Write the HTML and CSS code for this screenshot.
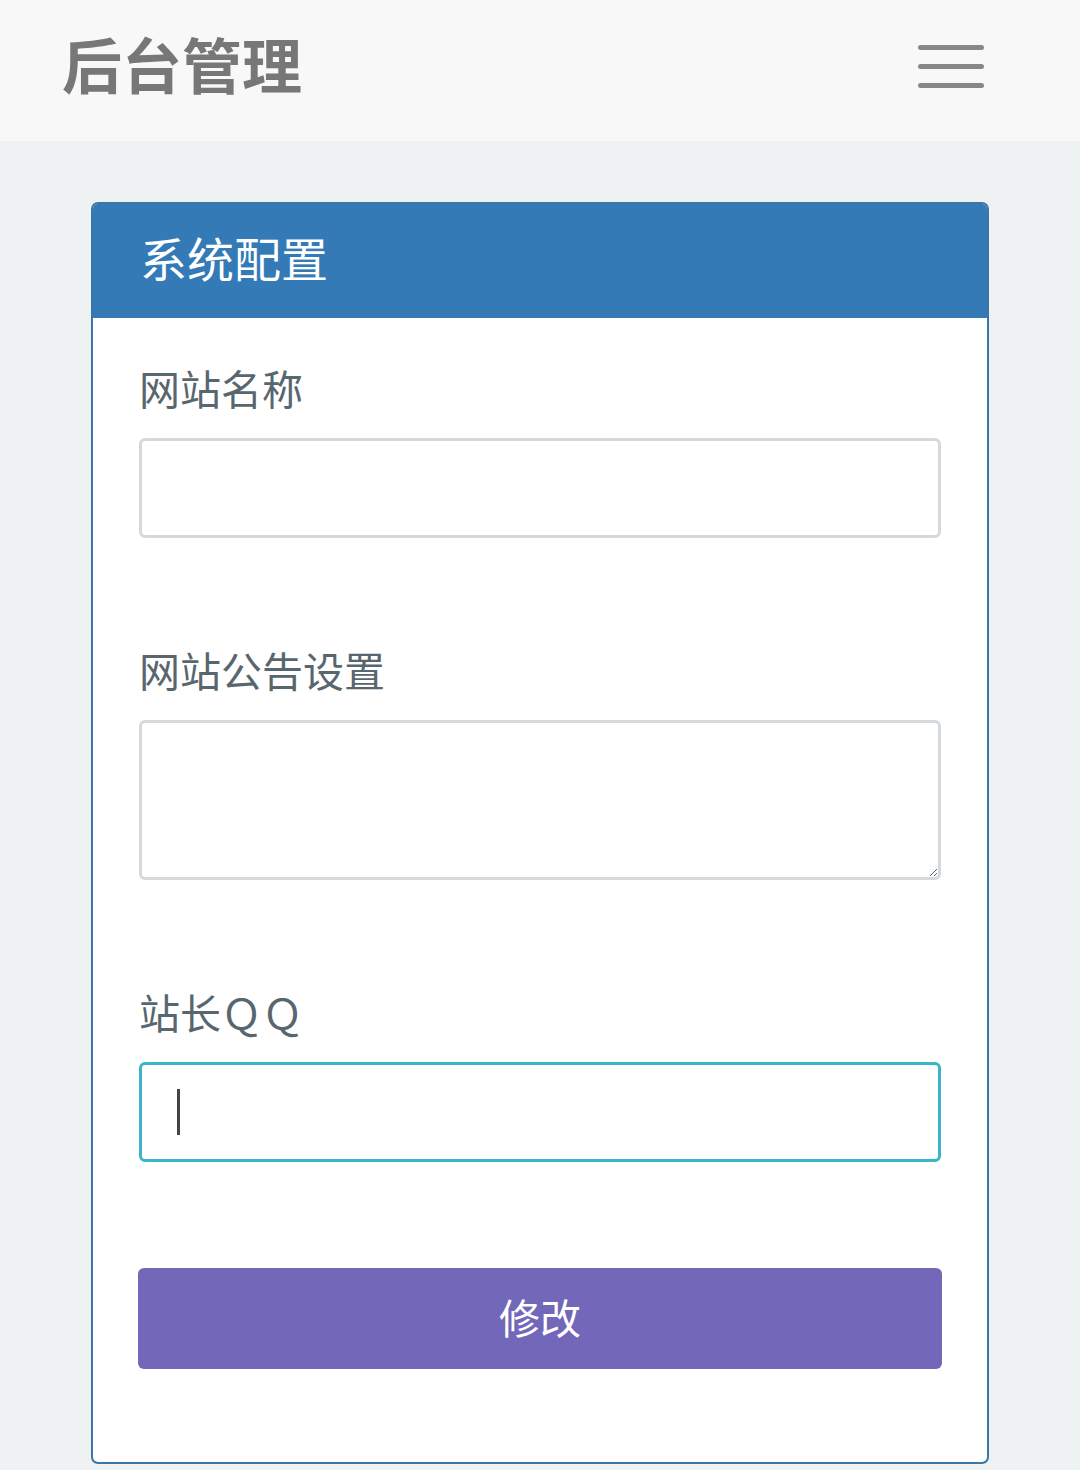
FILE: index.html
```html
<!DOCTYPE html>
<html lang="zh-CN">

<head>
    <meta charset="utf-8">
    <title>后台管理</title>
    <link rel="stylesheet" href="styles.css">
</head>

<body>
    <div class="navbar">
        <div class="brand">后台管理</div>
        <div class="toggle"><span></span><span></span><span></span></div>
    </div>

    <div class="main">
        <div class="panel">
            <div class="panel-heading">系统配置</div>
            <div class="panel-body">
                <div class="group">
                    <label>网站名称</label>
                    <input type="text" class="field">
                </div>
                <div class="group">
                    <label>网站公告设置</label>
                    <textarea class="field area"></textarea>
                </div>
                <div class="group">
                    <label>站长ＱＱ</label>
                    <div class="field-wrap">
                        <input type="text" class="field focus">
                        <span class="caret"></span><!--typing caret-->
                    </div>
                </div>
                <button class="btn">修改</button>
            </div>
        </div>
    </div>
</body>

</html>
```

FILE: styles.css
```css
/*Page*/
body {
    margin: 0;
    background: #eef2f3;
    font-family: "Noto Sans CJK SC", "Noto Sans", sans-serif;
}

/*Top bar*/
div.navbar {
    height: 141px;
    background: #f8f8f8;
    display: flex;
    align-items: center;
    justify-content: space-between;
    padding: 0 96px 0 62px;
}

div.brand {
    font-size: 60px;
    font-weight: bold;
    color: #777;
    line-height: 1;
    margin-top: -16px;
}

div.toggle {
    display: flex;
    flex-direction: column;
    gap: 14px;
    margin-top: -8px;
}

div.toggle span {
    display: block;
    width: 66px;
    height: 5px;
    border-radius: 3px;
    background: #888;
}

/*Panel*/
div.main {
    padding: 61px 0 0 91px;
}

div.panel {
    width: 894px;
    border: 2px solid #3b76a6;
    border-radius: 7px;
    background: #fff;
    overflow: hidden;
}

div.panel-heading {
    height: 114px;
    background: #337ab7;
    color: #fff;
    font-size: 47px;
    line-height: 106px;
    padding-left: 47px;
}

div.panel-body {
    padding: 44px 46px 93px;
}

div.group {
    margin-bottom: 106px;
}

div.group label {
    display: block;
    font-size: 41px;
    line-height: 51px;
    color: #58666e;
    margin-bottom: 25px;
}

.field {
    display: block;
    box-sizing: border-box;
    width: 802px;
    height: 100px;
    margin: 0;
    border: 3px solid #d3d9dc;
    border-radius: 6px;
    background: #fff;
    outline: none;
    font-size: 36px;
    padding: 0 37px;
}

.field.area {
    height: 160px;
    resize: vertical;
}

.field.focus {
    border-color: #3cb4c9;
}

div.field-wrap {
    position: relative;
}

span.caret {
    position: absolute;
    left: 38px;
    top: 27px;
    width: 3px;
    height: 46px;
    background: #444;
}

button.btn {
    display: block;
    width: 804px;
    height: 101px;
    margin-left: -1px;
    border: none;
    border-radius: 6px;
    background: #7367b9;
    color: #fff;
    font-family: "Noto Sans CJK SC", sans-serif;
    font-size: 41px;
    padding-bottom: 6px;
}
```
